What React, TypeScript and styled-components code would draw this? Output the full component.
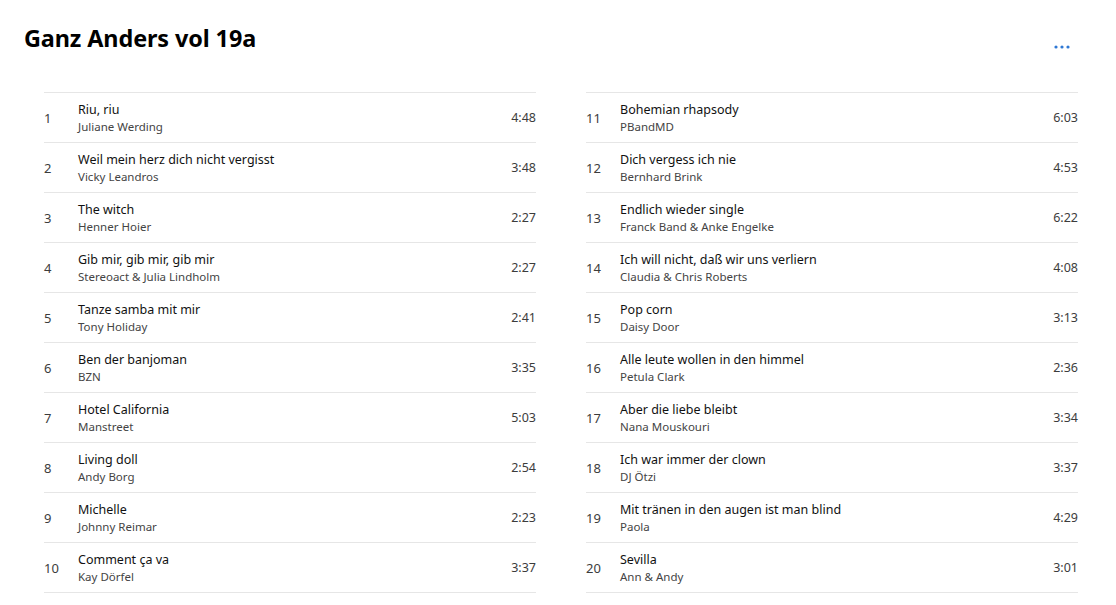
import React from 'react';
import styled, { createGlobalStyle } from 'styled-components';

const GlobalStyle = createGlobalStyle`
  html, body {
    margin: 0;
    padding: 0;
    background: #ffffff;
  }
  body {
    font-family: 'Noto Sans', 'Open Sans', sans-serif;
    color: #1a1a1a;
  }
`;

type Track = { no: number; title: string; artist: string; length: string };

const tracks: Track[] = [
  { no: 1, title: 'Riu, riu', artist: 'Juliane Werding', length: '4:48' },
  { no: 2, title: 'Weil mein herz dich nicht vergisst', artist: 'Vicky Leandros', length: '3:48' },
  { no: 3, title: 'The witch', artist: 'Henner Hoier', length: '2:27' },
  { no: 4, title: 'Gib mir, gib mir, gib mir', artist: 'Stereoact & Julia Lindholm', length: '2:27' },
  { no: 5, title: 'Tanze samba mit mir', artist: 'Tony Holiday', length: '2:41' },
  { no: 6, title: 'Ben der banjoman', artist: 'BZN', length: '3:35' },
  { no: 7, title: 'Hotel California', artist: 'Manstreet', length: '5:03' },
  { no: 8, title: 'Living doll', artist: 'Andy Borg', length: '2:54' },
  { no: 9, title: 'Michelle', artist: 'Johnny Reimar', length: '2:23' },
  { no: 10, title: 'Comment ça va', artist: 'Kay Dörfel', length: '3:37' },
  { no: 11, title: 'Bohemian rhapsody', artist: 'PBandMD', length: '6:03' },
  { no: 12, title: 'Dich vergess ich nie', artist: 'Bernhard Brink', length: '4:53' },
  { no: 13, title: 'Endlich wieder single', artist: 'Franck Band & Anke Engelke', length: '6:22' },
  { no: 14, title: 'Ich will nicht, daß wir uns verliern', artist: 'Claudia & Chris Roberts', length: '4:08' },
  { no: 15, title: 'Pop corn', artist: 'Daisy Door', length: '3:13' },
  { no: 16, title: 'Alle leute wollen in den himmel', artist: 'Petula Clark', length: '2:36' },
  { no: 17, title: 'Aber die liebe bleibt', artist: 'Nana Mouskouri', length: '3:34' },
  { no: 18, title: 'Ich war immer der clown', artist: 'DJ Ötzi', length: '3:37' },
  { no: 19, title: 'Mit tränen in den augen ist man blind', artist: 'Paola', length: '4:29' },
  { no: 20, title: 'Sevilla', artist: 'Ann & Andy', length: '3:01' },
];

const Page = styled.div`
  width: 1116px;
  height: 605px;
  overflow: hidden;
  box-sizing: border-box;
`;

const Header = styled.header`
  display: flex;
  justify-content: space-between;
  align-items: flex-start;
  padding: 22px 46px 0 24px;
  height: 70px;
  box-sizing: border-box;
`;

const Title = styled.h1`
  margin: 0;
  font-size: 23.4px;
  line-height: 32px;
  font-weight: 700;
  color: #000;
  letter-spacing: -0.1px;
`;

const MoreButton = styled.button`
  background: none;
  border: none;
  padding: 0;
  margin-top: 21px;
  width: 16px;
  height: 8px;
  display: flex;
  align-items: center;
  cursor: pointer;
`;

const Columns = styled.div`
  display: grid;
  grid-template-columns: 492px 492px;
  column-gap: 50px;
  padding: 22px 38px 0 44px;
`;

const List = styled.ol`
  list-style: none;
  margin: 0;
  padding: 0;
  border-bottom: 1px solid #e6e6e6;
`;

const Row = styled.li`
  display: flex;
  align-items: center;
  height: 50px;
  box-sizing: border-box;
  border-top: 1px solid #e6e6e6;
`;

const Number = styled.span`
  width: 34px;
  flex-shrink: 0;
  font-size: 13px;
  color: #3c3c3c;
`;

const Info = styled.div`
  flex: 1;
  display: flex;
  flex-direction: column;
  min-width: 0;
`;

const SongTitle = styled.span`
  font-size: 12.5px;
  line-height: 17px;
  color: #111;
`;

const Artist = styled.span`
  font-size: 11.5px;
  line-height: 17px;
  color: #444;
`;

const Duration = styled.span`
  font-size: 12.5px;
  color: #3c3c3c;
`;

const TrackList: React.FC<{ items: Track[] }> = ({ items }) => (
  <List>
    {items.map((t) => (
      <Row key={t.no}>
        <Number>{t.no}</Number>
        <Info>
          <SongTitle>{t.title}</SongTitle>
          <Artist>{t.artist}</Artist>
        </Info>
        <Duration>{t.length}</Duration>
      </Row>
    ))}
  </List>
);

const App: React.FC = () => (
  <Page>
    <GlobalStyle />
    <Header>
      <Title>Ganz Anders vol 19a</Title>
      <MoreButton aria-label="More">
        <svg width="16" height="4" viewBox="0 0 16 4">
          <circle cx="2" cy="2" r="1.6" fill="#2f78d4" />
          <circle cx="8" cy="2" r="1.6" fill="#2f78d4" />
          <circle cx="14" cy="2" r="1.6" fill="#2f78d4" />
        </svg>
      </MoreButton>
    </Header>
    <Columns>
      <TrackList items={tracks.slice(0, 10)} />
      <TrackList items={tracks.slice(10)} />
    </Columns>
  </Page>
);

export default App;
